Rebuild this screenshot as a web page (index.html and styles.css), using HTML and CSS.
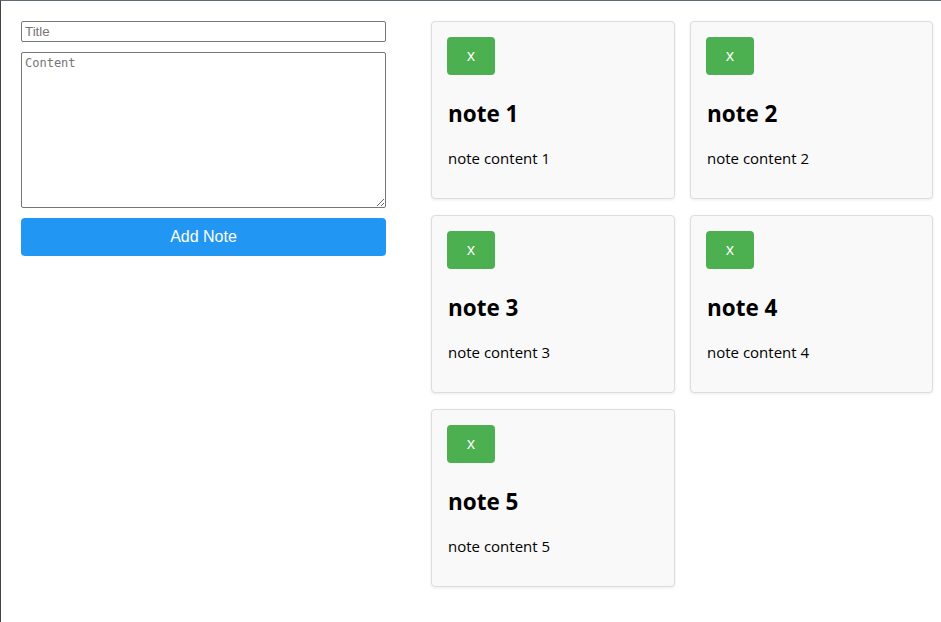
FILE: index.html
```html
<!DOCTYPE html>
<html>
<head>
<meta charset="utf-8">
<link rel="stylesheet" href="styles.css">
</head>
<body>
<div class="app">
  <form class="editor">
    <input class="title-input" type="text" placeholder="Title">
    <textarea class="content-input" placeholder="Content"></textarea>
    <button class="add-btn" type="button">Add Note</button>
  </form>
  <div class="notes">
    <div class="note">
      <button class="del-btn" type="button">x</button>
      <h2 class="note-title">note 1</h2>
      <p class="note-text">note content 1</p>
    </div>
    <div class="note">
      <button class="del-btn" type="button">x</button>
      <h2 class="note-title">note 2</h2>
      <p class="note-text">note content 2</p>
    </div>
    <div class="note">
      <button class="del-btn" type="button">x</button>
      <h2 class="note-title">note 3</h2>
      <p class="note-text">note content 3</p>
    </div>
    <div class="note">
      <button class="del-btn" type="button">x</button>
      <h2 class="note-title">note 4</h2>
      <p class="note-text">note content 4</p>
    </div>
    <div class="note">
      <button class="del-btn" type="button">x</button>
      <h2 class="note-title">note 5</h2>
      <p class="note-text">note content 5</p>
    </div>
  </div>
</div>
</body>
</html>
```

FILE: styles.css
```css
html, body {
  margin: 0;
  padding: 0;
  background: #fff;
}
body {
  box-sizing: border-box;
  height: 100vh;
  border-top: 1px solid #5f6a71;
  border-left: 1px solid #444;
  font-family: "Open Sans", "Noto Sans", sans-serif;
}
.app {
  display: grid;
  grid-template-columns: 365px 502px;
  column-gap: 45px;
  align-items: start;
  padding: 20px 8px 20px 20px;
}
.editor {
  display: flex;
  flex-direction: column;
  gap: 10px;
  margin: 0;
}
.title-input {
  box-sizing: border-box;
  width: 100%;
  height: 21px;
  margin: 0;
  font-family: "Liberation Sans", Arial, sans-serif;
  font-size: 13.333px;
  border: 1px solid #767676;
  border-radius: 2px;
  padding: 1px 3px;
}
.title-input::placeholder { color: #757575; }
.content-input {
  box-sizing: border-box;
  width: 100%;
  height: 156px;
  margin: 0;
  font-family: "DejaVu Sans Mono", "Liberation Mono", monospace;
  font-size: 12px;
  border: 1px solid #767676;
  border-radius: 2px;
  padding: 3px 3px;
}
.content-input::placeholder { color: #757575; }
.add-btn {
  height: 38px;
  border: none;
  border-radius: 4px;
  background: #2196f3;
  color: #fff;
  font-family: "Liberation Sans", Arial, sans-serif;
  font-size: 16px;
  cursor: pointer;
}
.notes {
  display: grid;
  grid-template-columns: 244px 243px;
  gap: 16px 15px;
}
.note {
  box-sizing: border-box;
  height: 178px;
  padding: 15px;
  background: #f9f9f9;
  border: 1px solid #ddd;
  border-radius: 4px;
  box-shadow: 0 1px 3px rgba(0, 0, 0, 0.08);
}
.del-btn {
  display: block;
  width: 48px;
  height: 38px;
  border: none;
  border-radius: 4px;
  background: #4caf50;
  color: #fff;
  font-family: "Open Sans", sans-serif;
  font-size: 16px;
  padding: 0 0 2px;
}
.note-title {
  margin: 23px 0 0 1px;
  font-size: 22.5px;
  line-height: 32px;
  font-weight: 700;
  color: #000;
}
.note-text {
  margin: 18px 0 0 1px;
  font-size: 15px;
  line-height: 21px;
  color: #000;
}
```
